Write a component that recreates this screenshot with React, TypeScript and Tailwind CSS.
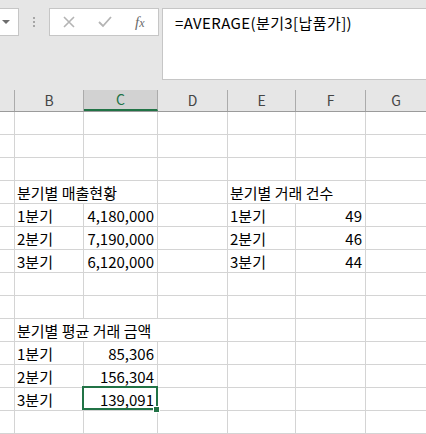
import React from "react";

const font = "font-['Noto_Sans_CJK_KR','Noto_Sans',sans-serif]";

type Cell = { text?: string; align?: "left" | "right"; overflow?: boolean };

const cols = ["w-[15px]", "w-[69px]", "w-[74px]", "w-[70px]", "w-[68px]", "w-[70px]", "flex-1"];
const headers = ["", "B", "C", "D", "E", "F", "G"];

// one row = 7 cells (A..G), 23px tall incl. bottom gridline
const rows: Cell[][] = [
  [],
  [],
  [],
  [{}, { text: "분기별 매출현황", overflow: true }, {}, {}, { text: "분기별 거래 건수", overflow: true }],
  [{}, { text: "1분기" }, { text: "4,180,000", align: "right" }, {}, { text: "1분기" }, { text: "49", align: "right" }],
  [{}, { text: "2분기" }, { text: "7,190,000", align: "right" }, {}, { text: "2분기" }, { text: "46", align: "right" }],
  [{}, { text: "3분기" }, { text: "6,120,000", align: "right" }, {}, { text: "3분기" }, { text: "44", align: "right" }],
  [],
  [],
  [{}, { text: "분기별 평균 거래 금액", overflow: true }, { overflow: true }, {}],
  [{}, { text: "1분기" }, { text: "85,306", align: "right" }],
  [{}, { text: "2분기" }, { text: "156,304", align: "right" }],
  [{}, { text: "3분기" }, { text: "139,091", align: "right" }],
  [],
];

function Toolbar() {
  return (
    <div className="flex h-[88px] items-start bg-[#e6e6e6] pt-[8px]">
      {/* name box */}
      <div className="flex h-[28px] w-[19px] items-center border border-l-0 border-[#c6c6c6] bg-white pl-[2px]">
        <div className="h-0 w-0 border-x-[4px] border-t-[4px] border-x-transparent border-t-[#6d6d6d]" />
      </div>
      {/* grip dots */}
      <div className="ml-[14px] mt-[9px] flex flex-col gap-[2px]">
        <div className="h-[2px] w-[2px] bg-[#a6a6a6]" />
        <div className="h-[2px] w-[2px] bg-[#a6a6a6]" />
        <div className="h-[2px] w-[2px] bg-[#a6a6a6]" />
      </div>
      {/* cancel / enter / fx */}
      <div className="ml-[14px] flex h-[28px] w-[110px] items-center border border-[#c6c6c6] bg-white pl-[13px]">
        <svg width="12" height="12" viewBox="0 0 12 12">
          <path d="M1 1 L11 11 M11 1 L1 11" stroke="#b4b4b4" strokeWidth="1.6" fill="none" />
        </svg>
        <svg className="ml-[23px]" width="14" height="12" viewBox="0 0 14 12">
          <path d="M1 6 L5 10 L13 1" stroke="#b4b4b4" strokeWidth="1.8" fill="none" />
        </svg>
        <span className="ml-[23px] font-['Liberation_Serif',serif] text-[15px] italic leading-none text-[#6a6a6a]">
          f<span className="text-[12px]">x</span>
        </span>
      </div>
      {/* formula bar */}
      <div
        className={`ml-[3px] h-[72px] flex-1 border border-r-0 border-[#c6c6c6] bg-white pl-[12px] pt-[3px] ${font} text-[15px] tracking-[0.4px] text-black whitespace-nowrap`}
      >
        =AVERAGE(분기3[납품가])
      </div>
    </div>
  );
}

function Header() {
  return (
    <div className="flex h-[24px] border-b border-[#9b9b9b] bg-[#e6e6e6]">
      {headers.map((h, i) => (
        <div
          key={i}
          className={`${cols[i]} mt-[2px] flex items-center justify-center ${i < 6 ? "border-r border-[#ababab]" : ""} ${
            h === "C" ? "border-b-2 border-b-[#217346] bg-[#d2d2d2] text-[#217346]" : "text-[#444]"
          } ${font} text-[14px]`}
        >
          {h}
        </div>
      ))}
    </div>
  );
}

export default function App() {
  return (
    <div className="h-[434px] w-[426px] overflow-hidden bg-white">
      <Toolbar />
      <Header />
      <div className="bg-white">
        {rows.map((row, r) => (
          <div key={r} className="flex h-[23px]">
            {cols.map((w, c) => {
              const cell = row[c] || {};
              const selected = r === 12 && c === 2;
              return (
                <div
                  key={c}
                  className={`${w} relative flex items-center border-b border-[#d4d4d4] ${
                    c < 6 && !cell.overflow ? "border-r" : ""
                  } ${cell.align === "right" ? "justify-end pr-[3px]" : "pl-[2px]"} ${font} text-[15px] leading-none text-black whitespace-nowrap`}
                >
                  {cell.text && <span className="relative z-10 pt-[1px]">{cell.text}</span>}
                  {selected && (
                    <>
                      {/* active cell outline + fill handle */}
                      <div className="absolute -left-[2px] -top-[2px] -right-[1px] bottom-0 z-20 border-2 border-[#217346]" />
                      <div className="absolute -right-[3px] -bottom-[3px] z-30 h-[7px] w-[7px] border border-white bg-[#217346]" />
                    </>
                  )}
                </div>
              );
            })}
          </div>
        ))}
      </div>
    </div>
  );
}
